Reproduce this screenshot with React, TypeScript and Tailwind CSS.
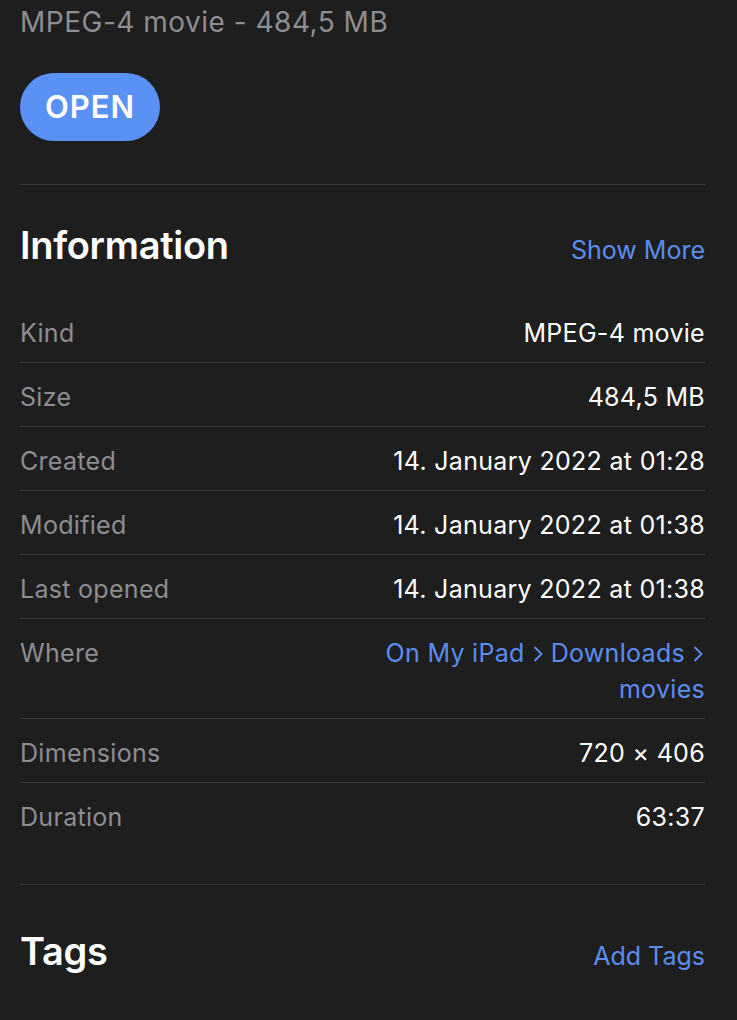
const rows: { label: string; value: string[]; link?: boolean }[] = [
  { label: "Kind", value: ["MPEG-4 movie"] },
  { label: "Size", value: ["484,5 MB"] },
  { label: "Created", value: ["14. January 2022 at 01:28"] },
  { label: "Modified", value: ["14. January 2022 at 01:38"] },
  { label: "Last opened", value: ["14. January 2022 at 01:38"] },
  { label: "Where", value: ["On My iPad \u203A Downloads \u203A", "movies"], link: true },
  { label: "Dimensions", value: ["720 × 406"] },
  { label: "Duration", value: ["63:37"] },
];

function Chevron({ last }: { last?: boolean }) {
  return (
    <svg
      width="13"
      height="18"
      viewBox="0 0 12 18"
      className={`inline-block -mt-[3px] ml-[7px] ${last ? "mr-0" : "mr-[6px]"}`}
    >
      <path d="M2.5 2.5 L9 9 L2.5 15.5" fill="none" stroke="currentColor" strokeWidth="1.8" strokeLinecap="round" strokeLinejoin="round" />
    </svg>
  );
}

export default function App() {
  return (
    <div className="min-h-[1020px] bg-[#1e1e1e] pl-5 pr-8 font-['Inter','Noto_Sans',sans-serif] overflow-hidden">
      {/* Header */}
      <div className="pt-[4px] text-[28px] leading-[36px] text-[#8d8d92] tracking-[0.5px]">MPEG-4 movie - 484,5 MB</div>
      <button className="mt-[33px] h-[68px] w-[140px] rounded-full bg-[#5a91f5] text-[31px] font-semibold text-white tracking-[1px]">
        OPEN
      </button>
      <div className="mt-[43px] h-px bg-[#3a3a3c]" />

      {/* Information */}
      <div className="flex items-baseline justify-between pt-[36px] pb-[30px]">
        <h2 className="text-[38px] leading-[48px] font-semibold text-white tracking-[-0.3px]">Information</h2>
        <span className="text-[25px] leading-[36px] text-[#5b8ef0]">Show More</span>
      </div>
      <div className="divide-y divide-[#3a3a3c]">
        {rows.map((r) => (
          <div key={r.label} className="flex justify-between pt-[16px] pb-[11px] text-[25px] leading-[36px] tracking-[0.3px]">
            <span className="text-[#8d8d92]">{r.label}</span>
            <div className={`text-right ${r.link ? "text-[#5b8ef0]" : "text-white"}`}>
              {r.link ? (
                <>
                  <div>
                    On My iPad<Chevron />Downloads<Chevron last />
                  </div>
                  <div>movies</div>
                </>
              ) : (
                r.value.map((v) => <div key={v}>{v}</div>)
              )}
            </div>
          </div>
        ))}
      </div>
      <div className="mt-[38px] h-px bg-[#3a3a3c]" />

      {/* Tags */}
      <div className="flex items-baseline justify-between pt-[42px]">
        <h2 className="text-[38px] leading-[48px] font-semibold text-white tracking-[-0.3px]">Tags</h2>
        <span className="text-[25px] leading-[36px] text-[#5b8ef0]">Add Tags</span>
      </div>
    </div>
  );
}
